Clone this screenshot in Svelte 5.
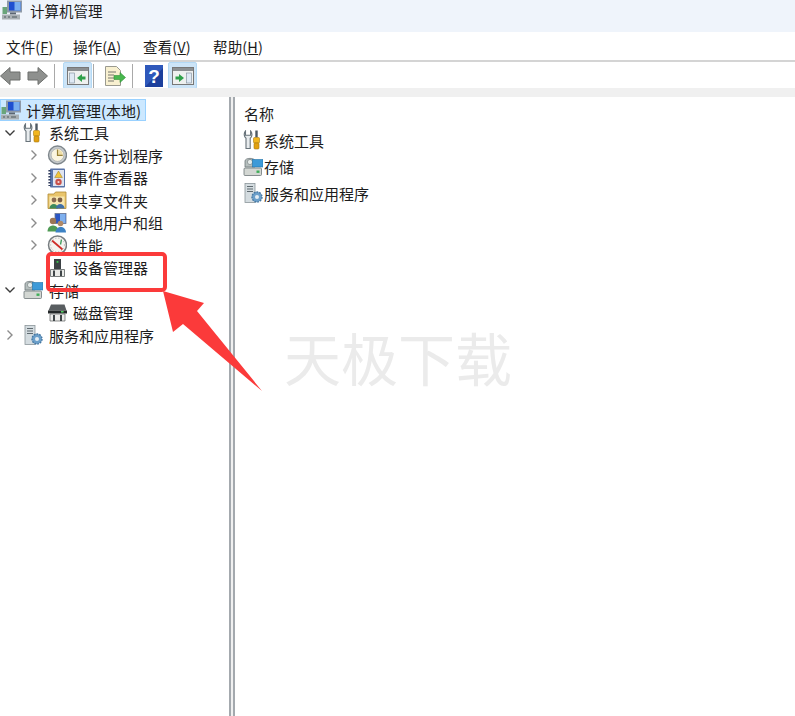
<script>
	const menus = [
		{ name: "文件(", key: "F" },
		{ name: "操作(", key: "A" },
		{ name: "查看(", key: "V" },
		{ name: "帮助(", key: "H" },
	];

	const tree = [
		{ label: "系统工具", icon: "tools", level: 1, arrow: "open" },
		{ label: "任务计划程序", icon: "clock", level: 2, arrow: "closed" },
		{ label: "事件查看器", icon: "event", level: 2, arrow: "closed" },
		{ label: "共享文件夹", icon: "share", level: 2, arrow: "closed" },
		{ label: "本地用户和组", icon: "users", level: 2, arrow: "closed" },
		{ label: "性能", icon: "perf", level: 2, arrow: "closed" },
		{ label: "设备管理器", icon: "device", level: 2 },
		{ label: "存储", icon: "storage", level: 1, arrow: "open" },
		{ label: "磁盘管理", icon: "disk", level: 2 },
		{ label: "服务和应用程序", icon: "services", level: 1, arrow: "closed" },
	];

	const list = [
		{ label: "系统工具", icon: "tools" },
		{ label: "存储", icon: "storage" },
		{ label: "服务和应用程序", icon: "services" },
	];
</script>

{#snippet icon(name)}
	<svg class="icon" viewBox="0 0 20 20" width="20" height="20" aria-hidden="true">
		{#if name === "computer"}
			<rect x="5" y="0.500" width="15" height="12" fill="#8f9aa8" />
			<rect x="7" y="2" width="11.500" height="8.500" fill="#1f4fd0" />
			<path d="M12.500 2h6v8.500h-6z" fill="#79aeef" />
			<path d="M8 12.500h6v2H8z" fill="#5b6673" />
			<rect x="0" y="14.500" width="18" height="5" fill="#a9b0b4" />
			<path d="M2 16.500h2v1H2zM6 16.500h2v1H6zM10 16.500h5v1h-5z" fill="#4e5a5e" />
			<path d="M0.500 7h4.500v7H0.500z" fill="#6aa57b" />
		{:else if name === "tools"}
			<path d="M2.500 1C0.500 3 1 7 3 8.300V18.500h4.200V8.300C9.300 7 9.600 3 7.600 1V5.200H5.800L2.500 5.200z" fill="#e8ecee" stroke="#68737a" stroke-width="1.100" />
			<rect x="12.300" y="0.500" width="2.400" height="7" fill="#4e5963" />
			<rect x="10.500" y="7.500" width="6" height="5.500" rx="1" fill="#f2b61e" stroke="#a87a10" stroke-width=".6" />
			<rect x="11" y="13" width="5" height="6" rx="1" fill="#e2a00f" stroke="#a87a10" stroke-width=".6" />
		{:else if name === "clock"}
			<circle cx="10.500" cy="10" r="9" fill="#c7cbcd" stroke="#7f878c" stroke-width="1.400" />
			<circle cx="10.500" cy="10" r="6.400" fill="#fbf5e0" stroke="#9aa0a3" stroke-width=".6" />
			<path d="M10.500 4.500v5.800h5.200A5.500 5.500 0 0 0 10.500 4.500z" fill="#efdfa9" />
			<path d="M10.500 4.500v5.800h5.200" fill="none" stroke="#9a8238" stroke-width="1.200" />
		{:else if name === "event"}
			<rect x="3" y="0.500" width="15" height="19" rx="1" fill="#5873a8" />
			<rect x="6" y="2" width="11" height="16" fill="#dfe4f0" />
			<path d="M11.500 3l3.800 6.500H7.700z" fill="#f2c53a" stroke="#9a7a1a" stroke-width=".5" />
			<circle cx="11.500" cy="14" r="3.200" fill="#c8504a" />
			<circle cx="11.500" cy="14" r="1.100" fill="#f4d7d5" />
			<path d="M2.500 2v16" stroke="#2e3a5c" stroke-width="2.200" stroke-dasharray="1.500 1.500" />
		{:else if name === "share"}
			<path d="M1 4h6l1.500-2H19v16.500H1z" fill="#e9c56c" stroke="#b08a35" stroke-width=".8" />
			<path d="M2.500 6.500h15v10.500h-15z" fill="#f7e6b0" />
			<circle cx="7" cy="10" r="2.400" fill="#8a6a50" />
			<path d="M2.500 18.500c0-6 8.500-6 8.500 0z" fill="#3d8a5c" />
			<circle cx="13" cy="10" r="2.400" fill="#7a5c44" />
			<path d="M9 18.500c0-6 8.500-6 8.500 0z" fill="#3f6fa8" />
		{:else if name === "users"}
			<rect x="8" y="0.500" width="11" height="10" fill="#2a56c4" stroke="#6b7890" stroke-width=".8" />
			<path d="M13 1h5.500v9H13z" fill="#7fb0ee" />
			<circle cx="6" cy="8" r="3.200" fill="#9a7656" />
			<path d="M0.500 18.500c0-8 11-8 11 0z" fill="#4f9a54" />
			<circle cx="13.500" cy="10.500" r="2.800" fill="#b08a68" />
			<path d="M8.500 19.500c0-7.500 10.500-7.500 10.500 0z" fill="#3d82c4" />
		{:else if name === "perf"}
			<circle cx="10.500" cy="10" r="9" fill="#f6f4f0" stroke="#777d80" stroke-width="1.500" />
			<path d="M5 5.500l10.500 9" stroke="#cf2d28" stroke-width="1.800" />
			<path d="M14.500 4.500l-1 5" stroke="#3d9a5a" stroke-width="1.300" />
			<circle cx="10.500" cy="10" r="6.900" fill="none" stroke="#aeb3b5" stroke-width=".9" stroke-dasharray="1.200 1.800" />
		{:else if name === "device"}
			<rect x="7" y="1" width="7" height="10" fill="#3b4144" />
			<rect x="9.600" y="3" width="1.800" height="1.800" fill="#39c24e" />
			<path d="M3.500 11.500h14v7h-14z" fill="#e9eae7" stroke="#5b5f60" stroke-width=".8" />
			<path d="M7 12.500v5.500M14 12.500v5.500" stroke="#3f4548" stroke-width="2" />
		{:else if name === "storage"}
			<path d="M2 10V4c0-3.500 10-3.500 10 0v6z" fill="#b5bebd" stroke="#6d7678" stroke-width=".8" />
			<circle cx="7" cy="5" r="2.600" fill="#e5ebe9" stroke="#6d7678" stroke-width=".6" />
			<rect x="9.500" y="2.500" width="10.500" height="7.500" fill="#3d9ad8" stroke="#2473a8" stroke-width=".6" />
			<rect x="1" y="11" width="17.500" height="7.500" rx="1" fill="#d3d7d3" stroke="#6d7678" stroke-width=".8" />
			<rect x="13.500" y="13.500" width="3" height="2.400" fill="#3fae58" />
		{:else if name === "disk"}
			<path d="M4 1.500h13.500l2 6H1.500z" fill="#585d60" />
			<path d="M1 7.500h19v3H1z" fill="#242829" />
			<rect x="14" y="8" width="2.600" height="1.500" fill="#4fd061" />
			<path d="M3 11h15v7H3z" fill="#ececea" stroke="#5b5f60" stroke-width=".7" />
			<path d="M7 12v6M14 12v6" stroke="#3f4548" stroke-width="2" />
		{:else if name === "services"}
			<rect x="2" y="0.500" width="10" height="19" fill="#d4dce0" stroke="#8c969b" stroke-width=".8" />
			<path d="M4 3.500h6M4 6h6M4 8.500h6" stroke="#5f6a70" stroke-width="1.100" />
			<circle cx="14" cy="14" r="5" fill="#6b9fca" stroke="#4678a2" stroke-width="1.400" stroke-dasharray="1.800 1" />
			<circle cx="14" cy="14" r="2" fill="#e3edf4" />
		{/if}
	</svg>
{/snippet}

{#snippet chevron(state)}
	<svg class="chevron" viewBox="0 0 12 12" width="12" height="12" aria-hidden="true">
		{#if state === "open"}
			<path d="M1.500 3.500L6 8l4.500-4.500" fill="none" stroke="#3c3c3c" stroke-width="1.400" />
		{:else if state === "closed"}
			<path d="M3.500 1.500L8 6l-4.500 4.500" fill="none" stroke="#8c8c8c" stroke-width="1.400" />
		{/if}
	</svg>
{/snippet}

<div class="window">
	<header class="titlebar">
		{@render icon("computer")}
		<span>计算机管理</span>
	</header>

	<nav class="menubar">
		{#each menus as m}
			<span class="menu">{m.name}<u>{m.key}</u>)</span>
		{/each}
	</nav>

	<div class="toolbar">
		<svg class="tool nav" viewBox="0 0 48 20" width="48" height="20" aria-hidden="true">
			<path d="M0.500 10L10 1.500V6h10v8H10v4.500z" fill="#8e908e" stroke="#6d6f6d" />
			<path d="M47.500 10L38 1.500V6H28v8h10v4.500z" fill="#8e908e" stroke="#6d6f6d" />
		</svg>
		<i class="sep"></i>
		<span class="tool-btn active">
			<svg viewBox="0 0 22 18" width="22" height="18" aria-hidden="true">
				<rect x=".5" y=".5" width="21" height="17" fill="#eef0ef" stroke="#777" />
				<rect x="1" y="1" width="20" height="3" fill="#8b8f92" />
				<rect x="2.500" y="6" width="5" height="10" fill="#dfe9f4" stroke="#7b8a9a" stroke-width=".6" />
				<path d="M15 7v8l-5-4z" fill="#2fa04a" />
				<rect x="15" y="9.500" width="3.500" height="3" fill="#2fa04a" />
			</svg>
		</span>
		<i class="sep"></i>
		<svg class="tool doc" viewBox="0 0 22 22" width="22" height="22" aria-hidden="true">
			<path d="M1.500 1.500h11l4 4v15h-15z" fill="#f8f0d0" stroke="#9a9a90" />
			<path d="M4 7h8M4 10h6M4 13h6M4 16h6" stroke="#77776f" stroke-width="1" />
			<path d="M10 10.500h6V7.500l5.500 5-5.500 5v-3h-6z" fill="#49b84e" stroke="#2f8f38" stroke-width=".6" />
		</svg>
		<i class="sep"></i>
		<svg class="tool help-icon" viewBox="0 0 18 22" width="18" height="22" aria-hidden="true">
			<rect width="18" height="22" fill="#1c3f9c" />
			<path d="M0 0h18v3L0 22z" fill="#2e58bb" />
			<text x="9" y="17.500" text-anchor="middle" class="help">?</text>
		</svg>
		<span class="tool-btn active last">
			<svg viewBox="0 0 22 18" width="22" height="18" aria-hidden="true">
				<rect x=".5" y=".5" width="21" height="17" fill="#eef0ef" stroke="#777" />
				<rect x="1" y="1" width="20" height="3" fill="#8b8f92" />
				<rect x="14.500" y="6" width="5" height="10" fill="#dfe9f4" stroke="#7b8a9a" stroke-width=".6" />
				<path d="M7 7v8l5-4z" fill="#2fa04a" />
				<rect x="3.500" y="9.500" width="3.500" height="3" fill="#2fa04a" />
			</svg>
		</span>
	</div>

	<main class="panes">
		<section class="tree">
			<div class="row root">
				<span class="selected">
					{@render icon("computer")}
					<span class="text">计算机管理(本地)</span>
				</span>
			</div>
			{#each tree as item}
				<div class="row" class:deep={item.level === 2}>
					{@render chevron(item.arrow)}
					{@render icon(item.icon)}
					<span class="text">{item.label}</span>
				</div>
			{/each}
		</section>

		<section class="list">
			<div class="heading">名称</div>
			{#each list as item}
				<div class="list-row">
					{@render icon(item.icon)}
					<span>{item.label}</span>
				</div>
			{/each}
		</section>
	</main>

	<div class="watermark">天极下载</div>
	<div class="callout"></div>
	<svg class="arrow" viewBox="160 288 105 106" width="105" height="106" aria-hidden="true">
		<path d="M163 291L204 303 197 311 262 391 183 324 173 332z" fill="#fb3a3a" />
	</svg>
</div>

<style>
	:global(body) {
		margin: 0;
		background: #fff;
	}

	.window {
		position: relative;
		width: 795px;
		height: 716px;
		overflow: hidden;
		display: flex;
		flex-direction: column;
		font-family: "Noto Sans CJK SC", "Noto Sans", sans-serif;
		font-size: 15px;
		color: #1c1c1c;
	}

	.icon,
	.chevron {
		flex: none;
	}

	.titlebar {
		height: 32px;
		flex: none;
		display: flex;
		align-items: center;
		gap: 8px;
		padding: 0 0 12px 2px;
		box-sizing: border-box;
		background: #eff4fb;
		font-size: 14.500px;
	}

	.menubar {
		height: 30px;
		flex: none;
		display: flex;
		align-items: center;
		padding: 0 0 0 6px;
		box-sizing: border-box;
		background: #fff;
		border-bottom: 2px solid #d4d4d4;
		font-size: 14.500px;
	}

	.menu {
		width: 70px;
		flex: none;
		letter-spacing: 0.15px;
	}

	.menu:first-child {
		width: 67px;
	}

	.toolbar {
		height: 26px;
		flex: none;
		display: flex;
		align-items: center;
		background: #fff;
		padding-top: 1px;
		box-sizing: border-box;
	}

	.sep {
		width: 1px;
		height: 24px;
		background: #a9a9a9;
		flex: none;
	}

	.tool {
		flex: none;
	}

	.nav {
		margin: 0 6px 0 0;
	}

	.doc {
		margin: 0 6px 0 10px;
	}

	.help-icon {
		margin: 0 5px 0 12px;
	}

	.tool-btn {
		width: 29px;
		height: 27px;
		display: flex;
		align-items: center;
		justify-content: center;
		box-sizing: border-box;
		flex: none;
		margin: 0 1px 0 8px;
	}

	.tool-btn.active {
		background: #cce4f7;
		border: 1px solid #b3d9f5;
		border-radius: 2px;
	}

	.tool-btn.last {
		margin-left: 0;
	}

	.panes {
		flex: 1;
		display: flex;
		background: #f0f0f0;
		padding-top: 9px;
		min-height: 0;
	}

	.tree {
		width: 231px;
		flex: none;
		background: #fff;
		border-right: 2px solid #a4a9ae;
		box-sizing: border-box;
		padding-top: 2px;
	}

	.row {
		height: 22.500px;
		display: flex;
		align-items: center;
		padding-left: 4px;
		white-space: nowrap;
	}

	.row.deep {
		padding-left: 28px;
	}

	.row .icon {
		margin: 0 6px 0 7px;
	}

	.row.root {
		padding-left: 0;
	}

	.selected {
		display: flex;
		align-items: center;
		height: 22px;
		width: 146px;
		background: #cce8ff;
		border: 1px solid #99d1ff;
		box-sizing: border-box;
	}

	.selected .icon {
		margin: 0 5px 0 0;
	}

	.list {
		flex: 1;
		margin-left: 2px;
		background: #fff;
		border-left: 2px solid #a4a9ae;
		padding-left: 9px;
	}

	.heading {
		height: 30px;
		padding-top: 2px;
		box-sizing: border-box;
		display: flex;
		align-items: center;
	}

	.list-row {
		height: 26.500px;
		display: flex;
		align-items: center;
		gap: 1px;
		margin-left: -1px;
	}

	.help {
		font-family: "Liberation Sans", sans-serif;
		font-weight: 700;
		font-size: 19px;
		fill: #fff;
	}

	.watermark {
		position: absolute;
		left: 284px;
		top: 320px;
		font-size: 57px;
		line-height: 72px;
		color: #ebebeb;
		white-space: nowrap;
	}

	.callout {
		position: absolute;
		left: 46px;
		top: 252px;
		width: 121px;
		height: 40px;
		box-sizing: border-box;
		border: 4px solid #fb3a3a;
		border-radius: 5px;
	}

	.arrow {
		position: absolute;
		left: 160px;
		top: 288px;
	}
</style>
